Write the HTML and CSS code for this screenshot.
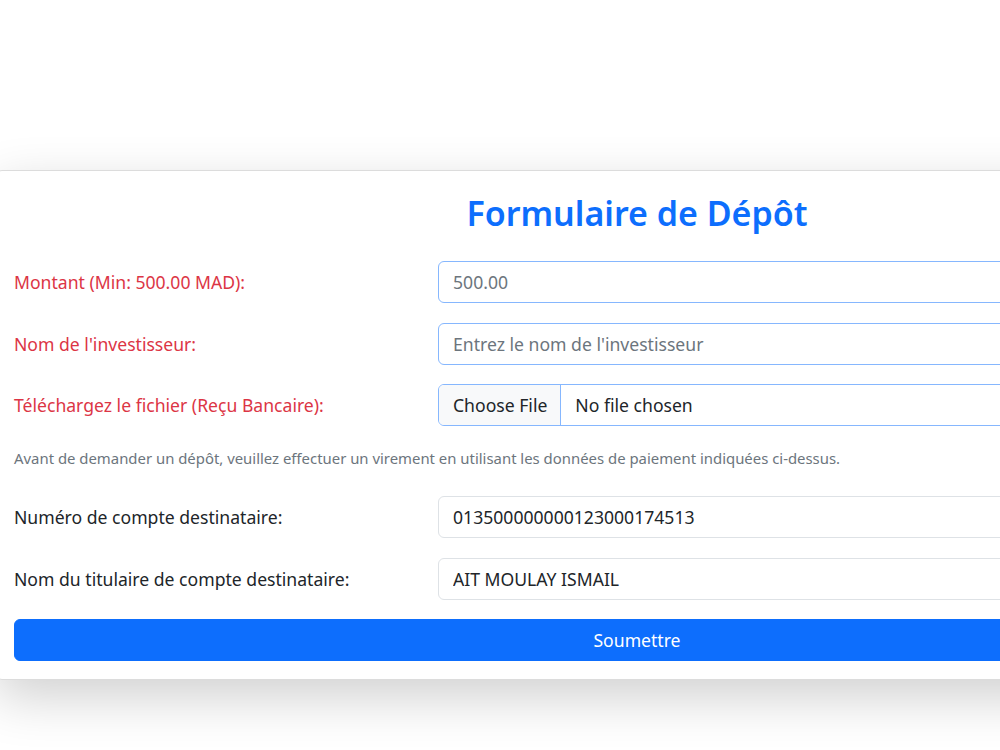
FILE: index.html
```html
<!DOCTYPE html>
<html lang="fr">
  <head>
    <meta charset="UTF-8" />
    <meta name="viewport" content="width=device-width, initial-scale=1.0" />
    <title>Formulaire de Dépôt</title>
    <link rel="stylesheet" href="styles.css">
  </head>
  <body>
    <div class="card">
      <h2 class="card-title">Formulaire de Dépôt</h2>

      <form id="depositForm">
        <div class="form-row">
          <label class="form-label required" for="montant">Montant (Min: 500.00 MAD):</label>
          <div class="form-field">
            <input type="text" id="montant" class="form-input active" placeholder="500.00" />
          </div>
        </div>

        <div class="form-row">
          <label class="form-label required" for="investisseur">Nom de l'investisseur:</label>
          <div class="form-field">
            <input type="text" id="investisseur" class="form-input active" placeholder="Entrez le nom de l'investisseur" />
          </div>
        </div>

        <div class="form-row">
          <label class="form-label required">Téléchargez le fichier (Reçu Bancaire):</label>
          <div class="form-field">
            <div class="file-input active">
              <span class="file-button">Choose File</span>
              <span class="file-name">No file chosen</span>
            </div>
          </div>
        </div>

        <p class="form-note">
          Avant de demander un dépôt, veuillez effectuer un virement en utilisant les données de paiement indiquées ci-dessus.
        </p>

        <div class="form-row">
          <label class="form-label" for="compte">Numéro de compte destinataire:</label>
          <div class="form-field">
            <input type="text" id="compte" class="form-input" value="013500000000123000174513" readonly />
          </div>
        </div>

        <div class="form-row">
          <label class="form-label" for="titulaire">Nom du titulaire de compte destinataire:</label>
          <div class="form-field">
            <input type="text" id="titulaire" class="form-input" value="AIT MOULAY ISMAIL" readonly />
          </div>
        </div>

        <button type="submit" class="submit-button">Soumettre</button>
      </form>
    </div>
  </body>
</html>
```

FILE: styles.css
```css
html {
  overflow: hidden;
}

body {
  margin: 0;
  padding: 0;
  min-height: 100vh;
  font-family: "Noto Sans", "Open Sans", sans-serif;
  background-color: #ffffff;
  color: #212529;
  font-size: 17.6px;
}

.card {
  width: 1246px;
  margin: 170px 0 0 -4px;
  padding: 17.6px 17px;
  background-color: #ffffff;
  border: 1px solid #dcdcdc;
  border-radius: 6px;
  box-shadow: 0 17px 52px rgba(0, 0, 0, 0.19);
}

.card-title {
  margin: 3px 0 27.4px;
  text-align: center;
  font-size: 34px;
  font-weight: 600;
  line-height: 42px;
  color: #0d6efd;
}

.form-row {
  display: flex;
  align-items: center;
  margin-bottom: 19.6px;
}

.form-label {
  width: 424px;
  color: #212529;
}

.form-label.required {
  color: #dc3545;
}

.form-field {
  flex: 1;
}

.form-input {
  box-sizing: border-box;
  width: 100%;
  height: 42px;
  padding: 0 14px;
  font-family: inherit;
  font-size: 17.6px;
  color: #212529;
  background-color: #ffffff;
  border: 1px solid #dee2e6;
  border-radius: 6px;
}

.form-input::placeholder {
  color: #6c757d;
}

.form-input:focus {
  outline: none;
}

.active {
  border-color: #86b7fe;
}

.file-input {
  box-sizing: border-box;
  display: flex;
  align-items: stretch;
  height: 42px;
  border: 1px solid #86b7fe;
  border-radius: 6px;
  overflow: hidden;
}

.file-button {
  display: flex;
  align-items: center;
  padding: 0 13px 0 14px;
  background-color: #f8f9fa;
  border-right: 1px solid #86b7fe;
  color: #212529;
}

.file-name {
  display: flex;
  align-items: center;
  padding: 0 14px;
  color: #212529;
}

.form-note {
  margin: 0 0 25.6px;
  font-size: 14.9px;
  line-height: 24.8px;
  color: #6c757d;
}

.submit-button {
  width: 100%;
  height: 42px;
  font-family: inherit;
  font-size: 17.6px;
  color: #ffffff;
  background-color: #0d6efd;
  border: 1px solid #0d6efd;
  border-radius: 6px;
  cursor: pointer;
}
```
